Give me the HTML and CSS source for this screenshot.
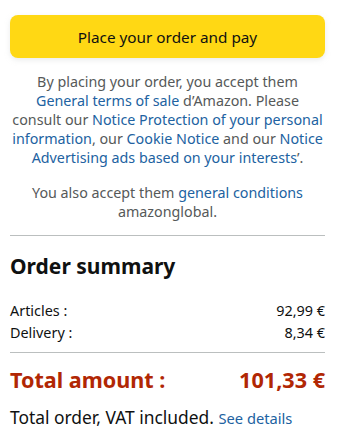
FILE: index.html
```html
<!DOCTYPE html>
<html>
<head>
<meta charset="utf-8">
<link rel="stylesheet" href="styles.css">
</head>
<body>
<div class="page">
  <button class="place-btn">Place your order and pay</button>
  <p class="legal">By placing your order, you accept them<br><a href="#">General terms of sale</a> d’Amazon. Please<br>consult our <a href="#">Notice Protection of your personal<br>information</a>, our <a href="#">Cookie Notice</a> and our <a href="#">Notice<br>Advertising ads based on your interests</a>’.</p>
  <p class="legal second">You also accept them <a href="#">general conditions</a><br>amazonglobal.</p>
  <hr class="divider">
  <h2 class="summary-title">Order summary</h2>
  <div class="row"><span>Articles :</span><span>92,99 €</span></div>
  <div class="row"><span>Delivery :</span><span>8,34 €</span></div>
  <hr class="divider thin">
  <div class="total"><span>Total amount :</span><span>101,33 €</span></div>
  <p class="vat">Total order, VAT included. <a href="#">See details</a></p>
</div>
</body>
</html>
```
FILE: styles.css
```css
* { box-sizing: border-box; }
body {
  margin: 0;
  background: #fff;
  font-family: "Noto Sans", Arial, sans-serif;
  color: #0f1111;
}
.page {
  padding: 15px 20px 0 10px;
  display: flex;
  flex-direction: column;
}
.place-btn {
  height: 43px;
  width: 100%;
  background: #ffd814;
  border: none;
  border-radius: 8px;
  box-shadow: 0 2px 5px rgba(213, 217, 217, 0.5);
  font-family: inherit;
  font-size: 15.3px;
  color: #0f1111;
}
.legal {
  margin: 14px -4px 0 -4px;
  text-align: center;
  font-size: 14.3px;
  line-height: 19px;
  color: #565959;
  white-space: nowrap;
}
.legal.second { margin-top: 16px; }
.legal a, .vat a {
  color: #2162a1;
  text-decoration: none;
}
.divider {
  margin: 14px 0 0 0;
  border: none;
  border-top: 1px solid #bbbfbf;
}
.summary-title {
  margin: 16px 0 0 0;
  font-size: 21px;
  font-weight: 700;
  line-height: 28px;
}
.row {
  display: flex;
  justify-content: space-between;
  font-size: 14.4px;
  line-height: 22px;
}
.summary-title + .row { margin-top: 20px; }
.divider.thin { margin-top: 8px; }
.total {
  display: flex;
  justify-content: space-between;
  margin-top: 13px;
  font-size: 21.6px;
  font-weight: 700;
  color: #b12704;
  line-height: 28px;
}
.vat {
  margin: 12px 0 0 0;
  font-size: 17.4px;
  line-height: 22px;
}
.vat a { font-size: 14.7px; }
```
